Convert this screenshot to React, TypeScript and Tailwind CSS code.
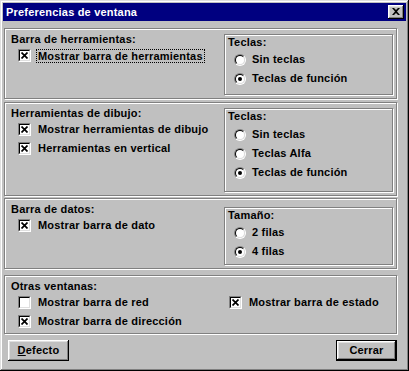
import React from "react";

const Check = ({ checked }: { checked?: boolean }) => (
  <span className="w-[13px] h-[13px] shrink-0 flex border border-t-[#808080] border-l-[#808080] border-b-white border-r-white">
    <span className="flex-1 flex items-center justify-center bg-white border border-t-black border-l-black border-b-[#dfdfdf] border-r-[#dfdfdf]">
      {checked && (
        <svg width="7" height="7" viewBox="0 0 7 7">
          <path d="M0.5 0.5L6.5 6.5M6.5 0.5L0.5 6.5" stroke="black" strokeWidth="1.7" />
        </svg>
      )}
    </span>
  </span>
);

const Radio = ({ checked }: { checked?: boolean }) => (
  <span className="w-[12px] h-[12px] shrink-0 flex rounded-full border border-t-[#808080] border-l-[#808080] border-b-white border-r-white">
    <span className="flex-1 flex items-center justify-center rounded-full bg-white border border-t-black border-l-black border-b-[#dfdfdf] border-r-[#dfdfdf]">
      {checked && <span className="w-[4px] h-[4px] rounded-full bg-black" />}
    </span>
  </span>
);

const CheckRow = ({ checked, label, focus }: { checked?: boolean; label: string; focus?: boolean }) => (
  <div className={`h-[19px] flex items-center pl-[7px] ${focus ? "gap-[5px]" : "gap-[7px]"}`}>
    <Check checked={checked} />
    {focus ? (
      <span className="border border-dotted border-black px-[1px] leading-[12px]">{label}</span>
    ) : (
      <span className="leading-[13px]">{label}</span>
    )}
  </div>
);

const RadioRow = ({ checked, label }: { checked?: boolean; label: string }) => (
  <div className="h-[19px] flex items-center gap-[6px] pl-[9px]">
    <Radio checked={checked} />
    <span className="leading-[13px]">{label}</span>
  </div>
);

const Etched = ({ className, children }: { className?: string; children?: React.ReactNode }) => (
  <div className={`border border-[#808080] shadow-[1px_1px_0_#fff,inset_1px_1px_0_#fff] ${className ?? ""}`}>{children}</div>
);

const Label = ({ children }: { children: React.ReactNode }) => (
  <div className="h-[13px] leading-[13px]">{children}</div>
);

export default function App() {
  return (
    <div className="w-[409px] h-[371px] bg-[#c0c0c0] p-[3px] flex flex-col font-['Liberation_Sans',Arial,sans-serif] font-bold text-[11px] tracking-[0.2px] text-black shadow-[inset_-1px_-1px_0_#000,inset_1px_1px_0_#dfdfdf,inset_-2px_-2px_0_#808080,inset_2px_2px_0_#fff]">
      <div className="h-[18px] bg-[#000080] flex items-center justify-between pl-[3px] pr-[2px]">
        <span className="text-white leading-[13px]">Preferencias de ventana</span>
        <span className="w-[16px] h-[14px] bg-[#c0c0c0] flex items-center justify-center shadow-[inset_-1px_-1px_0_#000,inset_1px_1px_0_#fff,inset_-2px_-2px_0_#808080,inset_2px_2px_0_#dfdfdf]">
          <svg width="8" height="7" viewBox="0 0 8 7" className="mb-[1px]">
            <path d="M0 0h2l2 2 2-2h2L5 3.5 8 7H6L4 5 2 7H0l3-3.5z" fill="black" />
          </svg>
        </span>
      </div>

      <div className="ml-[1px] w-[393px] flex flex-col">
        {/* Group 1 */}
        <Etched className="mt-[7px] h-[71px] flex">
          <div className="flex-1 pl-[6px] pt-[4px]">
            <Label>Barra de herramientas:</Label>
            <CheckRow checked label="Mostrar barra de herramientas" focus />
          </div>
          <Etched className="w-[169px] h-[61px] mt-[5px] mr-[3px] pl-[3px] pt-[1px]">
            <Label>Teclas:</Label>
            <div className="-ml-[3px] mt-[1px]">
              <RadioRow label="Sin teclas" />
              <RadioRow checked label="Teclas de función" />
            </div>
          </Etched>
        </Etched>

        {/* Group 2 */}
        <Etched className="mt-[3px] h-[94px] flex">
          <div className="flex-1 pl-[6px] pt-[4px]">
            <Label>Herramientas de dibujo:</Label>
            <CheckRow checked label="Mostrar herramientas de dibujo" />
            <CheckRow checked label="Herramientas en vertical" />
          </div>
          <Etched className="w-[169px] h-[84px] mt-[5px] mr-[3px] pl-[3px] pt-[1px]">
            <Label>Teclas:</Label>
            <div className="-ml-[3px] mt-[2px]">
              <RadioRow label="Sin teclas" />
              <RadioRow label="Teclas Alfa" />
              <RadioRow checked label="Teclas de función" />
            </div>
          </Etched>
        </Etched>

        {/* Group 3 */}
        <Etched className="mt-[2px] h-[71px] flex">
          <div className="flex-1 pl-[6px] pt-[4px]">
            <Label>Barra de datos:</Label>
            <CheckRow checked label="Mostrar barra de dato" />
          </div>
          <Etched className="w-[169px] h-[58px] mt-[8px] mr-[3px] pl-[3px] pt-[1px]">
            <Label>Tamaño:</Label>
            <div className="-ml-[3px] mt-[1px]">
              <RadioRow label="2 filas" />
              <RadioRow checked label="4 filas" />
            </div>
          </Etched>
        </Etched>

        {/* Group 4 */}
        <Etched className="mt-[6px] h-[59px] pl-[6px] pt-[4px]">
          <Label>Otras ventanas:</Label>
          <div className="flex">
            <div className="w-[218px]">
              <CheckRow label="Mostrar barra de red" />
              <CheckRow checked label="Mostrar barra de dirección" />
            </div>
            <div className="-ml-[7px]">
              <CheckRow checked label="Mostrar barra de estado" />
            </div>
          </div>
        </Etched>

        {/* Buttons */}
        <div className="mt-[6px] flex justify-between pl-[4px] pr-[0px]">
          <button className="w-[61px] h-[21px] bg-[#c0c0c0] flex items-center justify-center leading-[13px] shadow-[inset_-1px_-1px_0_#000,inset_1px_1px_0_#fff,inset_-2px_-2px_0_#808080,inset_2px_2px_0_#dfdfdf]">
            <span><span className="underline">D</span>efecto</span>
          </button>
          <button className="w-[61px] h-[21px] bg-[#c0c0c0] border border-black flex items-center justify-center leading-[13px] shadow-[inset_-1px_-1px_0_#000,inset_1px_1px_0_#fff,inset_-2px_-2px_0_#808080,inset_2px_2px_0_#dfdfdf]">
            Cerrar
          </button>
        </div>
      </div>
    </div>
  );
}
